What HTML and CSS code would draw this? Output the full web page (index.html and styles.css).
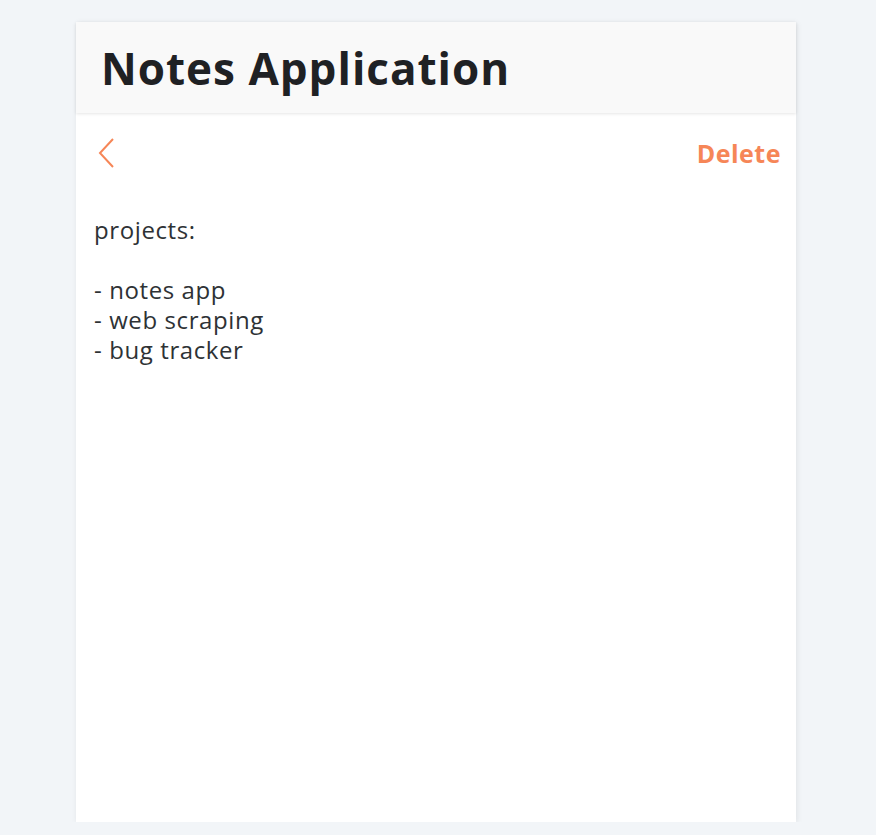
FILE: index.html
```html
<!DOCTYPE html>
<html>
<head>
<meta charset="utf-8">
<link rel="stylesheet" href="styles.css">
</head>
<body>
<div class="container">
  <div class="app">
    <div class="app-header">
      <h1>Notes Application</h1>
    </div>
    <div class="note">
      <div class="note-header">
        <svg class="back" width="18" height="30" viewBox="0 0 18 30"><path d="M15 1 L2 15 L15 29" fill="none" stroke="#f68657" stroke-width="2"/></svg>
        <button class="delete">Delete</button>
      </div>
      <div class="note-body">projects:

- notes app
- web scraping
- bug tracker</div>
    </div>
  </div>
</div>
</body>
</html>
```
FILE: styles.css
```css
html, body {
  margin: 0;
  padding: 0;
  background: #f2f5f8;
  font-family: "Open Sans", Lato, sans-serif;
}
.container {
  width: 720px;
  margin: 22px 0 0 76px;
}
.app {
  background: #fff;
  height: 800px;
  box-shadow: 1px 1px 6px rgba(0,0,0,0.08);
  display: flex;
  flex-direction: column;
}
.app-header {
  background: #f9f9f9;
  height: 91px;
  display: flex;
  align-items: center;
  padding-left: 25px;
  box-shadow: 0 1px 3px rgba(0,0,0,0.1);
}
.app-header h1 {
  margin: 0;
  font-size: 44px;
  font-weight: 700;
  letter-spacing: 1px;
  color: #1f2124;
}
.note-header {
  display: flex;
  justify-content: space-between;
  align-items: center;
  padding: 24px 15px 0 22px;
  height: 32px;
}
.back { display: block; }
.delete {
  background: none;
  border: none;
  padding: 0;
  font-family: inherit;
  font-size: 25px;
  font-weight: 700;
  letter-spacing: 0.5px;
  color: #f68657;
}
.note-body {
  white-space: pre-wrap;
  padding: 46px 18px;
  font-size: 24px;
  letter-spacing: 0.6px;
  line-height: 30px;
  color: #2e3235;
}
```
